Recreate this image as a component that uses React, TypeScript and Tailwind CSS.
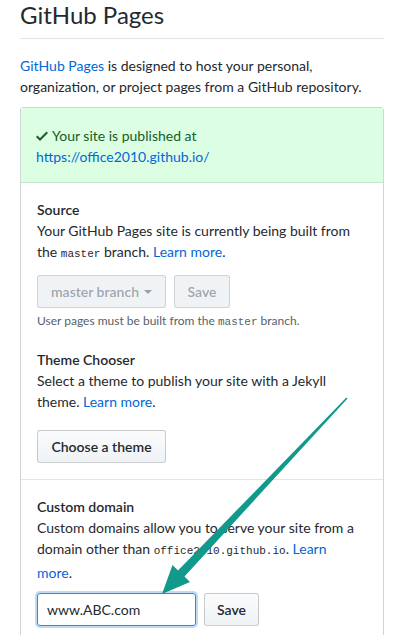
import React from "react";

function Code({ children }: { children: React.ReactNode }) {
  return <span className="text-[11px] [font-family:'Liberation_Mono',monospace]">{children}</span>;
}

export default function App() {
  return (
    <div className="relative w-[404px] h-[635px] overflow-hidden bg-white px-5 text-[14px] leading-[21px] text-[#24292e] [font-family:Lato,'Noto_Sans',Arial,sans-serif]">
      <h2 className="text-[24px] leading-[30px] font-normal pb-2 border-b border-[#e1e4e8]">GitHub Pages</h2>
      <p className="mt-4 mb-[10px]">
        <a className="text-[#0366d6]">GitHub Pages</a> is designed to host your personal, organization, or project pages from a GitHub repository.
      </p>
      <div className="border border-[#d1d5da] rounded-[3px] h-[600px]">
        <div className="bg-[#dcffe4] border-b border-[#c2e6c9] px-[15px] pt-[17px] pb-[15px] text-[#165c26]">
          <div className="flex items-center gap-[4px]">
            <svg width="12" height="16" viewBox="0 0 12 16" className="shrink-0">
              <path d="M12 5l-8 8-4-4 1.5-1.5L4 10l6.5-6.5L12 5z" fill="#1e5a2a" />
            </svg>
            <span>Your site is published at</span>
          </div>
          <a className="text-[#0366d6]">https://office2010.github.io/</a>
        </div>
        <div className="p-4">
          <div className="font-semibold">Source</div>
          <div>
            Your GitHub Pages site is currently being built from the <Code>master</Code> branch.{" "}
            <a className="text-[#0366d6]">Learn more</a>.
          </div>
          <div className="mt-[10px] flex gap-2">
            <button className="h-[33px] w-[129px] rounded-[3px] border border-[rgba(27,31,35,0.15)] bg-[#eff3f6] text-[rgba(36,41,46,0.4)] font-semibold flex items-center justify-center gap-[5px]">
              master branch
              <svg width="8" height="4" viewBox="0 0 8 4">
                <path d="M0 0h8L4 4z" fill="rgba(36,41,46,0.4)" />
              </svg>
            </button>
            <button className="h-[33px] w-[56px] rounded-[3px] border border-[rgba(27,31,35,0.15)] bg-[#eff3f6] text-[rgba(36,41,46,0.4)] font-semibold">
              Save
            </button>
          </div>
          <div className="mt-[4px] text-[12px] leading-[18px] text-[#586069]">
            User pages must be built from the <Code>master</Code> branch.
          </div>
          <div className="mt-[18px] font-semibold">Theme Chooser</div>
          <div>
            Select a theme to publish your site with a Jekyll theme.{" "}
            <a className="text-[#0366d6]">Learn more</a>.
          </div>
          <button className="mt-[18px] h-[33px] w-[129px] rounded-[3px] border border-[rgba(27,31,35,0.2)] bg-gradient-to-b from-[#fafbfc] to-[#eff3f6] font-semibold">
            Choose a theme
          </button>
        </div>
        <div className="border-t border-[#e1e4e8] p-4">
          <div className="font-semibold">Custom domain</div>
          <div>
            Custom domains allow you to serve your site from a domain other than <Code>office2010.github.io</Code>.{" "}
            <a className="text-[#0366d6]">
              Learn
              <br />
              more
            </a>
            .
          </div>
          <div className="mt-[10px] flex gap-2">
            <div className="h-[33px] w-[159px] rounded-[3px] border border-[#2188ff] shadow-[0_0_0_2px_rgba(3,102,214,0.25)] flex items-center px-[9px]">
              www.ABC.com
            </div>
            <button className="h-[33px] w-[55px] rounded-[3px] border border-[rgba(27,31,35,0.2)] bg-gradient-to-b from-[#fafbfc] to-[#eff3f6] font-semibold">
              Save
            </button>
          </div>
        </div>
      </div>
      <svg className="absolute left-0 top-0 pointer-events-none" width="404" height="635" viewBox="0 0 404 635">
        <polygon
          points="162,594 190,582 184.5,576.5 347.6,398.4 346.4,397.6 178,570.5 172.5,565"
          fill="#119a8c"
        />
      </svg>
    </div>
  );
}
